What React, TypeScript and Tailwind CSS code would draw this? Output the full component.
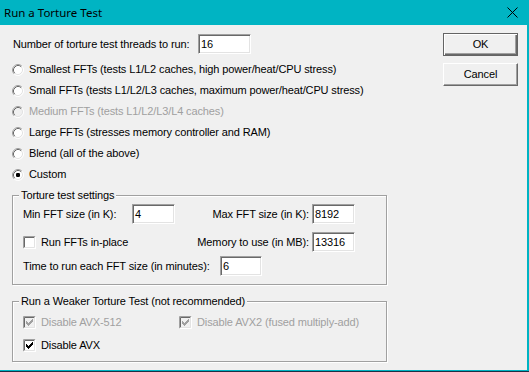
import type { ReactNode } from "react";

const ui = "font-['Liberation_Sans',Arial,sans-serif] text-[11px] leading-[13px] tracking-[-0.12px]";

function RadioMark({ checked, disabled }: { checked?: boolean; disabled?: boolean }) {
  return (
    <svg width="12" height="12" viewBox="0 0 12 12" className="shrink-0">
      <circle cx="6" cy="6" r="5" fill={disabled ? "#f0f0f0" : "#ffffff"} />
      <path d="M2.11 9.89A5.5 5.5 0 0 1 9.89 2.11" stroke="#a0a0a0" fill="none" />
      <path d="M9.89 2.11A5.5 5.5 0 0 1 2.11 9.89" stroke="#ffffff" fill="none" />
      <path d="M2.82 9.18A4.5 4.5 0 0 1 9.18 2.82" stroke="#696969" fill="none" />
      <path d="M9.18 2.82A4.5 4.5 0 0 1 2.82 9.18" stroke="#e3e3e3" fill="none" />
      {checked && <rect x="4" y="4" width="4" height="4" rx="1.2" fill="#000" />}
    </svg>
  );
}

function CheckMark({ checked, disabled }: { checked?: boolean; disabled?: boolean }) {
  return (
    <svg width="13" height="13" viewBox="0 0 13 13" className="shrink-0">
      <rect width="13" height="13" fill={disabled ? "#f0f0f0" : "#ffffff"} />
      <path d="M0.5 12.5V0.5H12.5" stroke="#a0a0a0" fill="none" />
      <path d="M0.5 12.5H12.5V0.5" stroke="#ffffff" fill="none" />
      <path d="M1.5 11.5V1.5H11.5" stroke="#696969" fill="none" />
      <path d="M1.5 11.5H11.5V1.5" stroke="#e3e3e3" fill="none" />
      {checked && (
        <path
          fill={disabled ? "#a0a0a0" : "#000"}
          d="M9 3h1v1h-1z M8 4h2v1h-2z M3 5h1v1h-1z M7 5h3v1h-3z M3 6h2v1h-2z M6 6h3v1h-3z M3 7h5v1h-5z M4 8h3v1h-3z M5 9h1v1h-1z"
        />
      )}
    </svg>
  );
}

function Radio({ label, checked, disabled }: { label: string; checked?: boolean; disabled?: boolean }) {
  return (
    <div className="flex h-[21px] items-center">
      <RadioMark checked={checked} disabled={disabled} />
      <span className={`ml-[5px] ${disabled ? "text-[#a0a0a0]" : "text-black"}`}>{label}</span>
    </div>
  );
}

function Check({ label, checked, disabled, className = "" }: { label: string; checked?: boolean; disabled?: boolean; className?: string }) {
  return (
    <div className={`flex items-center ${className}`}>
      <CheckMark checked={checked} disabled={disabled} />
      <span className={`ml-[5px] ${disabled ? "text-[#a0a0a0]" : "text-black"}`}>{label}</span>
    </div>
  );
}

function Field({ value, className = "" }: { value: string; className?: string }) {
  return (
    <div
      className={`flex h-[20px] items-center border border-t-[#a0a0a0] border-l-[#a0a0a0] border-r-white border-b-white bg-white pl-[2px] shadow-[inset_1px_1px_0_#696969,inset_-1px_-1px_0_#e3e3e3] ${className}`}
    >
      {value}
    </div>
  );
}

function Group({ title, children, className = "" }: { title: string; children: ReactNode; className?: string }) {
  return (
    <fieldset
      className={`border border-[#a0a0a0] shadow-[inset_1px_1px_0_#fff,1px_1px_0_#fff] ${className}`}
    >
      <legend className="ml-[6px] bg-[#f0f0f0] px-[2px]">{title}</legend>
      {children}
    </fieldset>
  );
}

function Button({ label, isDefault }: { label: string; isDefault?: boolean }) {
  return (
    <button
      className={`flex h-[23px] w-[75px] items-center justify-center bg-[#f0f0f0] ${
        isDefault
          ? "border border-[#646464] shadow-[inset_1px_1px_0_#fff,inset_-1px_-1px_0_#696969,inset_-2px_-2px_0_#a0a0a0]"
          : "border border-t-white border-l-white border-r-[#696969] border-b-[#696969] shadow-[inset_-1px_-1px_0_#a0a0a0]"
      }`}
    >
      {label}
    </button>
  );
}

export default function App() {
  return (
    <div className="h-[372px] w-[529px] overflow-hidden bg-[#1d3045]">
      <div className="flex h-[371px] flex-col border-r-2 border-b border-[#00b4c3] bg-[#f0f0f0]">
        <div className="flex h-[25px] shrink-0 items-center justify-between bg-[#00b4c3] pl-[4px] pr-[9px]">
          <span className="font-['Noto_Sans','Open_Sans',sans-serif] text-[11.5px] text-black">
            Run a Torture Test
          </span>
          <svg width="11" height="11" viewBox="0 0 11 11">
            <path d="M0.5 0.5L10.5 10.5M10.5 0.5L0.5 10.5" stroke="#000" />
          </svg>
        </div>

        <div className={`flex flex-1 ${ui} text-black`}>
          <div className="ml-[12px] w-[375px] pt-[9px]">
            <div className="flex h-[20px] items-center pl-px">
              <span className="w-[185px]">Number of torture test threads to run:</span>
              <Field value="16" className="w-[53px]" />
            </div>

            <div className="mt-[5px]">
              <Radio label="Smallest FFTs (tests L1/L2 caches, high power/heat/CPU stress)" />
              <Radio label="Small FFTs (tests L1/L2/L3 caches, maximum power/heat/CPU stress)" />
              <Radio label="Medium FFTs (tests L1/L2/L3/L4 caches)" disabled />
              <Radio label="Large FFTs (stresses memory controller and RAM)" />
              <Radio label="Blend (all of the above)" />
              <Radio label="Custom" checked />
            </div>

            <Group title="Torture test settings" className="mt-[4px] pt-[2px] pb-[8px]">
              <div className="flex h-[20px] items-center pl-[10px]">
                <span className="w-[109px]">Min FFT size (in K):</span>
                <Field value="4" className="w-[43px]" />
                <span className="w-[137px] pr-[3px] text-right">Max FFT size (in K):</span>
                <Field value="8192" className="w-[43px]" />
              </div>
              <div className="mt-[8px] flex h-[20px] items-center pl-[10px]">
                <Check label="Run FFTs in-place" className="w-[152px]" />
                <span className="w-[137px] pr-[3px] text-right">Memory to use (in MB):</span>
                <Field value="13316" className="w-[43px]" />
              </div>
              <div className="mt-[4px] flex h-[20px] items-center pl-[10px]">
                <span className="w-[197px]">Time to run each FFT size (in minutes):</span>
                <Field value="6" className="w-[42px]" />
              </div>
            </Group>

            <Group title="Run a Weaker Torture Test (not recommended)" className="mt-[10px] pt-[3px] pb-[4px]">
              <div className="flex h-[23px] items-center pl-[10px]">
                <Check label="Disable AVX-512" checked disabled className="w-[156px]" />
                <Check label="Disable AVX2 (fused multiply-add)" checked disabled />
              </div>
              <div className="flex h-[23px] items-center pl-[10px]">
                <Check label="Disable AVX" checked />
              </div>
            </Group>
          </div>

          <div className="ml-[56px] flex flex-col gap-[7px] pt-[8px]">
            <Button label="OK" isDefault />
            <Button label="Cancel" />
          </div>
        </div>
      </div>
      <div className="h-px" />
    </div>
  );
}
